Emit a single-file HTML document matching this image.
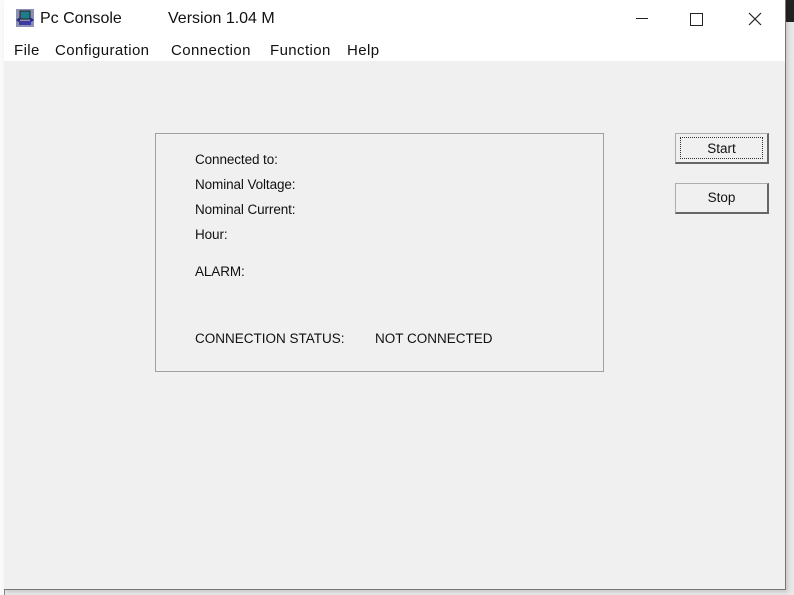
<!DOCTYPE html>
<html><head><style>
body{margin:0;width:794px;height:595px;background:#e8e8e8;position:relative;overflow:hidden;font-family:"Liberation Sans",sans-serif}
.abs{position:absolute}
#win{left:4px;top:0;width:781px;height:589px;background:#f0f0f0;border-right:1px solid #777;border-bottom:1px solid #777;box-shadow:2px 2px 4px rgba(0,0,0,.15)}
#title{left:0;top:0;width:781px;height:36px;background:#fff}
#menu{left:0;top:36px;width:781px;height:25px;background:#fff;font-size:15px;color:#111;letter-spacing:0.4px}
.m{position:absolute;top:6px}
.lbl{position:absolute;font-size:13.5px;color:#111;letter-spacing:-0.1px;left:39px}
.btn{position:absolute;left:671px;width:94px;height:31px;background:#f0f0f0;border:1px solid #adadad;border-right:2px solid #666;border-bottom:2px solid #666;font-size:13.5px;text-align:center;line-height:28px;box-sizing:border-box;color:#111}
</style></head><body>
<div class="abs" style="left:786px;top:0;width:8px;height:22px;background:#222"></div>
<div class="abs" style="left:0;top:0;width:4px;height:595px;background:#fafafa;border-right:1px solid #888"></div>
<div id="win" class="abs">
 <div id="title" class="abs">
  <svg class="abs" style="left:11px;top:8px" width="20" height="20" viewBox="0 0 20 20">
   <rect x="1" y="1" width="18" height="18" fill="#8d8fb3"/>
   <rect x="5" y="3" width="10" height="8" fill="#1f7c8c" stroke="#222"/>
   <path d="M1 12 L5 9 L5 15 Z M19 12 L15 9 L15 15 Z" fill="#2b2b8a"/>
   <rect x="4" y="13" width="12" height="4" fill="#3a3aa0"/>
  </svg>
  <div class="abs" style="left:36px;top:10px;font-size:16px;color:#111">Pc Console</div>
  <div class="abs" style="left:164px;top:10px;font-size:16px;color:#111">Version 1.04 M</div>
  <div class="abs" style="left:632px;top:18px;width:12px;height:1px;background:#222"></div>
  <div class="abs" style="left:686px;top:13px;width:11px;height:11px;border:1px solid #222"></div>
  <svg class="abs" style="left:744px;top:12px" width="14" height="14"><path d="M1 1L13 13M13 1L1 13" stroke="#222" stroke-width="1.2"/></svg>
 </div>
 <div id="menu" class="abs">
  <span class="m" style="left:10px">File</span>
  <span class="m" style="left:51px">Configuration</span>
  <span class="m" style="left:167px">Connection</span>
  <span class="m" style="left:266px">Function</span>
  <span class="m" style="left:343px">Help</span>
 </div>
 <div class="abs" style="left:151px;top:133px;width:447px;height:237px;border:1px solid #a0a0a0">
  <div class="lbl" style="top:18px">Connected to:</div>
  <div class="lbl" style="top:43px">Nominal Voltage:</div>
  <div class="lbl" style="top:68px">Nominal Current:</div>
  <div class="lbl" style="top:93px">Hour:</div>
  <div class="lbl" style="top:130px">ALARM:</div>
  <div class="lbl" style="top:197px;letter-spacing:0">CONNECTION STATUS:</div>
  <div class="lbl" style="top:197px;left:219px;letter-spacing:0">NOT CONNECTED</div>
 </div>
 <div class="btn" style="top:133px"><div style="position:absolute;left:4px;top:3px;right:4px;bottom:3px;border:1px dotted #333;line-height:22px">Start</div></div>
 <div class="btn" style="top:183px">Stop</div>
</div>
</body></html>
